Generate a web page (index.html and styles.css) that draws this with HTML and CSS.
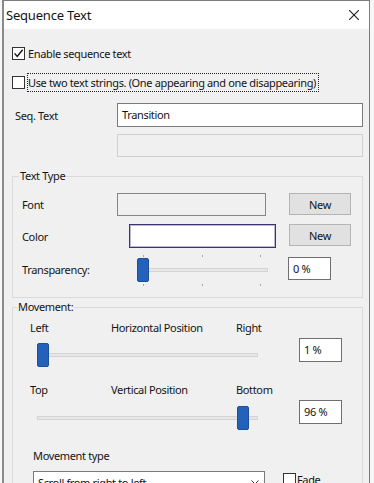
FILE: index.html
```html
<!DOCTYPE html>
<html lang="en">
<head>
    <meta charset="UTF-8">
    <meta name="viewport" content="width=device-width, initial-scale=1.0">
    <title>Sequence Text</title>
    <link rel="stylesheet" href="styles.css">
</head>
<body>

<div class="dialog">
    <div class="titlebar">
        <span class="title">Sequence Text</span>
        <svg class="close" viewBox="0 0 10 10"><path d="M0 0L10 10M10 0L0 10"/></svg>
    </div>

    <div class="content">
        <label class="check-row first">
            <span class="check"><svg viewBox="0 0 11 11"><path d="M1.6 5.4L4.2 8.4L9.6 1.8"/></svg></span>
            <span>Enable sequence text</span>
        </label>
        <label class="check-row second">
            <span class="check"></span>
            <span class="focus">Use two text strings. (One appearing and one disappearing)</span>
        </label>

        <div class="seq-row">
            <span class="seq-label">Seq. Text</span>
            <div class="edit">Transition</div>
        </div>
        <div class="edit edit-disabled"></div>

        <!-- Text Type -->
        <fieldset class="group text-type">
            <legend>Text Type</legend>

            <div class="prop-row row-font">
                <span class="prop-label">Font</span>
                <div class="font-box"></div>
                <button class="btn">New</button>
            </div>

            <div class="prop-row row-color">
                <span class="prop-label">Color</span>
                <div class="color-box"></div>
                <button class="btn">New</button>
            </div>

            <div class="prop-row row-trans">
                <span class="prop-label">Transparency:</span>
                <div class="slider trans-slider">
                    <span class="tick tick-top" style="left: 6px"></span>
                    <span class="tick tick-top" style="left: 65px"></span>
                    <span class="tick tick-top" style="left: 123px"></span>
                    <div class="track"></div>
                    <span class="thumb" style="left: 0px"></span>
                    <span class="tick tick-bottom" style="left: 6px"></span>
                    <span class="tick tick-bottom" style="left: 65px"></span>
                    <span class="tick tick-bottom" style="left: 123px"></span>
                </div>
                <div class="pct-box">0 %</div>
            </div>
        </fieldset>

        <!-- Movement -->
        <fieldset class="group movement">
            <legend>Movement:</legend>

            <div class="pos-labels">
                <span class="pl-start">Left</span>
                <span class="pl-mid">Horizontal Position</span>
                <span>Right</span>
            </div>
            <div class="pos-control">
                <div class="slider pos-slider">
                    <div class="track"></div>
                    <span class="thumb" style="left: 0px"></span>
                </div>
                <div class="pct-box">1 %</div>
            </div>

            <div class="pos-labels second">
                <span class="pl-start">Top</span>
                <span class="pl-mid">Vertical Position</span>
                <span>Bottom</span>
            </div>
            <div class="pos-control">
                <div class="slider pos-slider vertical">
                    <div class="track"></div>
                    <span class="thumb" style="left: 200px"></span>
                </div>
                <div class="pct-box">96 %</div>
            </div>

            <div class="move-label">Movement type</div>
            <div class="move-row">
                <div class="select">
                    <span>Scroll from right to left</span>
                    <svg class="chevron" viewBox="0 0 8 5"><path d="M0.5 0.5L4 4L7.5 0.5"/></svg>
                </div>
                <label class="fade">
                    <span class="check"></span>
                    <span>Fade</span>
                </label>
            </div>
        </fieldset>
    </div>
</div>

</body>
</html>
```

FILE: styles.css
```css
/* Base */
* {
    box-sizing: border-box;
}

body {
    margin: 0;
    background-color: #f7f7f7;
    font-family: "Noto Sans", Arial, sans-serif;
    font-size: 11px;
    letter-spacing: -0.35px;
    color: #141414;
    overflow: hidden;
}

/* Window */
.dialog {
    margin-left: 2px;
    width: 368px;
    height: 540px;
    border: 1px solid #7c7c7c;
    border-left: 2px solid #8a8a8a;
    background-color: #f0f0f0;
}

.titlebar {
    height: 28px;
    background-color: #ffffff;
    display: flex;
    align-items: center;
    justify-content: space-between;
    padding: 0 10px 0 2px;
}

.title {
    font-size: 13px;
    letter-spacing: -0.2px;
}

.close {
    width: 10px;
    height: 10px;
    stroke: #1e1e1e;
    stroke-width: 1.1;
    fill: none;
}

.content {
    padding: 0 6px 0 8px;
}

/* Checkboxes */
.check-row {
    display: flex;
    align-items: center;
    gap: 3px;
    height: 17px;
}

.check-row.first {
    margin-top: 16px;
}

.check-row.second {
    margin-top: 12px;
}

.check {
    width: 13px;
    height: 13px;
    flex: none;
    border: 1px solid #333333;
    background-color: #ffffff;
}

.check svg {
    display: block;
    width: 11px;
    height: 11px;
    fill: none;
    stroke: #111111;
    stroke-width: 1.4;
}

.focus {
    line-height: 17px;
    padding-right: 2px;
    outline: 1px dotted #222222;
}

/* Seq text */
.seq-row {
    display: grid;
    grid-template-columns: 105px 1fr;
    align-items: center;
    margin-top: 12px;
}

.seq-label {
    padding-left: 3px;
}

.edit {
    height: 24px;
    line-height: 22px;
    padding: 0 4px;
    border: 1px solid #7a7a7a;
    background-color: #ffffff;
}

.edit-disabled {
    height: 23px;
    margin: 7px 0 0 105px;
    border-color: #cfcfcf;
    background-color: #f0f0f0;
}

/* Group boxes */
.group {
    margin: 12px 0 0;
    padding: 0 0 15px;
    min-width: 0;
    border: 1px solid #dadada;
}

.group legend {
    margin-left: 6px;
    padding: 0 1px;
    line-height: 14px;
}

.movement {
    margin-top: 2px;
}

.movement legend {
    margin-left: 4px;
}

/* Text Type rows */
.prop-row {
    display: flex;
    align-items: flex-start;
}

.prop-label {
    flex: none;
    padding-left: 9px;
    align-self: center;
}

.row-font {
    margin-top: 10px;
}

.row-font .prop-label {
    width: 104px;
}

.font-box {
    width: 149px;
    height: 23px;
    border: 1px solid #858585;
    background-color: #f0f0f0;
}

.row-font .btn {
    margin-left: 23px;
}

.row-color {
    margin-top: 8px;
}

.row-color .prop-label {
    width: 116px;
}

.color-box {
    width: 147px;
    height: 24px;
    border: 1px solid #3a3570;
    box-shadow: inset 0 0 0 1px #b9b6d6;
    background-color: #ffffff;
}

.row-color .btn {
    margin-left: 13px;
}

.btn {
    width: 62px;
    height: 22px;
    padding: 0;
    font-family: inherit;
    font-size: 11px;
    letter-spacing: inherit;
    color: #141414;
    background-color: #e1e1e1;
    border: 1px solid #b4b4b4;
}

.row-trans {
    margin-top: 9px;
}

.row-trans .prop-label {
    width: 124px;
}

.trans-slider {
    width: 131px;
    margin-top: 1px;
}

.row-trans .pct-box {
    margin-left: 20px;
}

/* Sliders */
.slider {
    position: relative;
    height: 24px;
}

.track {
    margin: 10px 0 0 6px;
    height: 4px;
    background-color: #e6e6e6;
    border: 1px solid #d4d4d4;
}

.thumb {
    position: absolute;
    top: 0;
    width: 12px;
    height: 24px;
    border-radius: 2px;
    background-color: #2461b8;
    border: 1px solid #1b4f9c;
}

.tick {
    position: absolute;
    width: 1px;
    height: 2px;
    background-color: #a8a8a8;
}

.tick-top {
    top: -3px;
}

.tick-bottom {
    bottom: -4px;
}

.pct-box {
    width: 43px;
    height: 23px;
    line-height: 21px;
    padding-left: 4px;
    border: 1px solid #6f6f6f;
    background-color: #ffffff;
}

/* Movement */
.pos-labels {
    display: flex;
    margin-top: 7px;
    padding-left: 17px;
    line-height: 14px;
}

.pos-labels.second {
    margin-top: 16px;
}

.pl-start {
    width: 81px;
}

.pl-mid {
    width: 125px;
}

.pos-control {
    display: flex;
    align-items: flex-start;
    margin-top: 3px;
}

.pos-slider {
    width: 221px;
    margin: 5px 0 0 24px;
}

.pos-slider .track {
    margin-left: 0;
}

.pos-slider.vertical {
    margin-top: 6px;
    height: 23px;
}

.pos-control .pct-box {
    margin-left: 41px;
    height: 24px;
}

.move-label {
    margin-top: 20px;
    padding-left: 20px;
    line-height: 14px;
}

.move-row {
    display: flex;
    align-items: flex-start;
    margin-top: 8px;
    padding-left: 20px;
}

.select {
    width: 232px;
    height: 23px;
    display: flex;
    align-items: center;
    justify-content: space-between;
    padding: 0 5px 0 4px;
    border: 1px solid #7a7a7a;
    background-color: #ffffff;
}

.chevron {
    width: 8px;
    height: 5px;
    fill: none;
    stroke: #333333;
    stroke-width: 1;
}

.fade {
    display: flex;
    align-items: center;
    gap: 1px;
    margin: 1px 0 0 18px;
}
```
